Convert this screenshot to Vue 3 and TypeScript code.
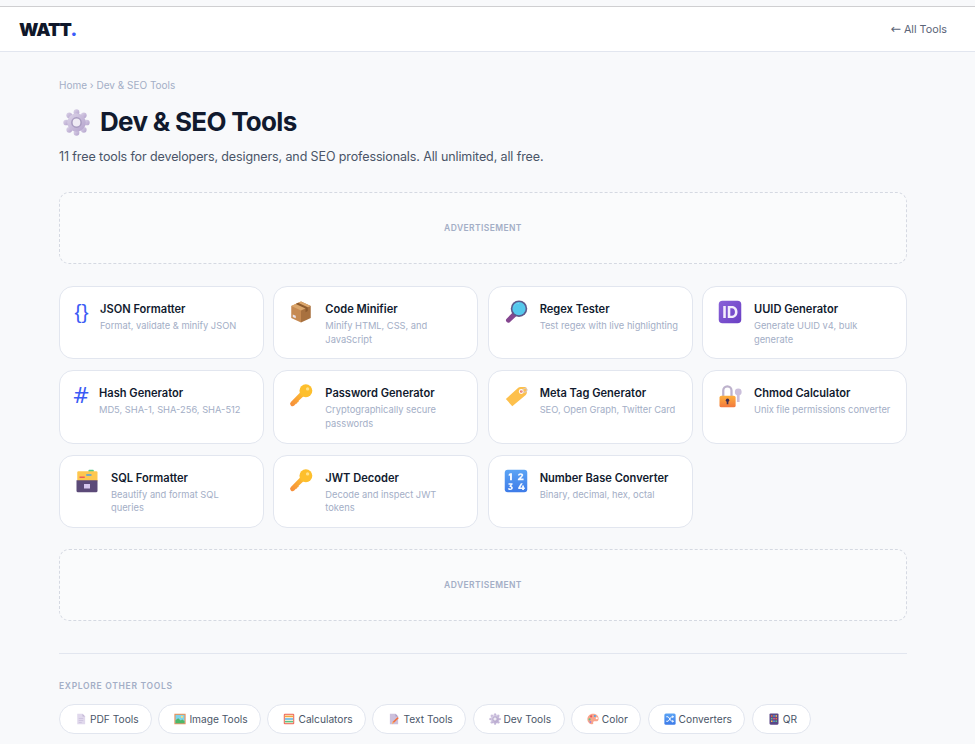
<script setup lang="ts">
interface Tool {
  name: string;
  desc: string;
  icon: string;
  iconWidth: number;
}

const tools: Tool[] = [
  { name: 'JSON Formatter', desc: 'Format, validate & minify JSON', icon: 'braces', iconWidth: 13 },
  { name: 'Code Minifier', desc: 'Minify HTML, CSS, and JavaScript', icon: 'box', iconWidth: 24 },
  { name: 'Regex Tester', desc: 'Test regex with live highlighting', icon: 'search', iconWidth: 24 },
  { name: 'UUID Generator', desc: 'Generate UUID v4, bulk generate', icon: 'id', iconWidth: 24 },
  { name: 'Hash Generator', desc: 'MD5, SHA-1, SHA-256, SHA-512', icon: 'hash', iconWidth: 12 },
  { name: 'Password Generator', desc: 'Cryptographically secure passwords', icon: 'key', iconWidth: 24 },
  { name: 'Meta Tag Generator', desc: 'SEO, Open Graph, Twitter Card', icon: 'tag', iconWidth: 24 },
  { name: 'Chmod Calculator', desc: 'Unix file permissions converter', icon: 'lock', iconWidth: 24 },
  { name: 'SQL Formatter', desc: 'Beautify and format SQL queries', icon: 'cabinet', iconWidth: 24 },
  { name: 'JWT Decoder', desc: 'Decode and inspect JWT tokens', icon: 'key', iconWidth: 24 },
  { name: 'Number Base Converter', desc: 'Binary, decimal, hex, octal', icon: 'numbers', iconWidth: 24 },
];

const chips = [
  { label: 'PDF Tools', icon: 'doc' },
  { label: 'Image Tools', icon: 'picture' },
  { label: 'Calculators', icon: 'abacus' },
  { label: 'Text Tools', icon: 'memo' },
  { label: 'Dev Tools', icon: 'gear' },
  { label: 'Color', icon: 'palette' },
  { label: 'Converters', icon: 'shuffle' },
  { label: 'QR', icon: 'qr' },
];
</script>

<template>
  <div class="page">
    <div class="top-strip"></div>
    <header class="header">
      <span class="logo">WATT<span class="logo-dot">.</span></span>
      <a class="back"><span class="back-arrow">←</span> All Tools</a>
    </header>

    <main class="main">
      <div class="crumbs">Home › Dev &amp; SEO Tools</div>
      <div class="title-row">
        <svg class="title-icon" viewBox="0 0 32 32">
          <use href="#i-gear" />
        </svg>
        <h1>Dev &amp; SEO Tools</h1>
      </div>
      <p class="lead">11 free tools for developers, designers, and SEO professionals. All unlimited, all free.</p>

      <div class="ad">ADVERTISEMENT</div>

      <div class="grid">
        <a v-for="tool in tools" :key="tool.name" class="card">
          <span class="card-icon" :style="{ width: tool.iconWidth + 'px' }">
            <span v-if="tool.icon === 'braces'" class="glyph braces">{}</span>
            <span v-else-if="tool.icon === 'hash'" class="glyph hash">#</span>
            <svg v-else viewBox="0 0 32 32" width="24" height="24">
              <use :href="'#i-' + tool.icon" />
            </svg>
          </span>
          <span class="card-body">
            <span class="card-name">{{ tool.name }}</span>
            <span class="card-desc">{{ tool.desc }}</span>
          </span>
        </a>
      </div>

      <div class="ad ad-second">ADVERTISEMENT</div>

      <div class="divider"></div>

      <div class="explore-label">EXPLORE OTHER TOOLS</div>
      <div class="chips">
        <a v-for="chip in chips" :key="chip.label" class="chip">
          <svg viewBox="0 0 32 32" width="12" height="12">
            <use :href="'#i-' + chip.icon" />
          </svg>
          {{ chip.label }}
        </a>
      </div>
    </main>

    <!-- shared emoji style icons -->
    <svg class="defs" width="0" height="0" aria-hidden="true">
      <defs>
        <linearGradient id="g-gear" x1="0" y1="0" x2="1" y2="1">
          <stop offset="0" stop-color="#ddd5e9" />
          <stop offset="1" stop-color="#b3a2cc" />
        </linearGradient>
        <linearGradient id="g-key" x1="1" y1="0" x2="0" y2="1">
          <stop offset="0" stop-color="#ffc72e" />
          <stop offset="1" stop-color="#f58a3c" />
        </linearGradient>
        <linearGradient id="g-blue" x1="0" y1="0" x2="0" y2="1">
          <stop offset="0" stop-color="#5ba4f5" />
          <stop offset="1" stop-color="#3d7be8" />
        </linearGradient>
        <linearGradient id="g-purple" x1="0" y1="0" x2="1" y2="1">
          <stop offset="0" stop-color="#8a63d8" />
          <stop offset="1" stop-color="#6a3fc4" />
        </linearGradient>
        <linearGradient id="g-lock" x1="0" y1="0" x2="0" y2="1">
          <stop offset="0" stop-color="#fdb03c" />
          <stop offset="1" stop-color="#f2793f" />
        </linearGradient>

        <symbol id="i-gear" viewBox="0 0 32 32">
          <g fill="url(#g-gear)">
            <circle cx="16" cy="3.800" r="3.400" />
            <circle cx="16" cy="28.200" r="3.400" />
            <circle cx="3.800" cy="16" r="3.400" />
            <circle cx="28.200" cy="16" r="3.400" />
            <circle cx="7.400" cy="7.400" r="3.400" />
            <circle cx="24.600" cy="7.400" r="3.400" />
            <circle cx="7.400" cy="24.600" r="3.400" />
            <circle cx="24.600" cy="24.600" r="3.400" />
            <circle cx="16" cy="16" r="11" />
          </g>
          <circle cx="16" cy="16" r="5.500" fill="#efebf4" stroke="#a89bc0" stroke-width="1.800" />
        </symbol>

        <symbol id="i-box" viewBox="0 0 32 32">
          <path d="M16 2 29 8v16l-13 6z" fill="#a8713f" />
          <path d="M16 2 3 8v16l13 6z" fill="#c68a52" />
          <path d="M3 8l13 6 13-6-13-6z" fill="#dba66b" />
          <path d="M9 5.200 22 11.200v5l3-1.400v-5.200L12 3.700z" fill="#8b5a2e" />
          <path d="M5 22.500l4 1.800v-3.200l-4-1.800z" fill="#e8e2ea" />
        </symbol>

        <symbol id="i-search" viewBox="0 0 32 32">
          <path d="M11.500 16.500 3.500 25a3 3 0 0 0 4.500 4.200L17 21z" fill="#84468f" />
          <circle cx="20" cy="11.500" r="11" fill="#5c5a8c" />
          <circle cx="20" cy="11.500" r="8.800" fill="#55c8ec" />
          <path d="M13 10a7 7 0 0 1 7-5.500 6.500 6.500 0 0 0-7 5.500z" fill="#bdeefb" />
        </symbol>

        <symbol id="i-id" viewBox="0 0 32 32">
          <rect x="1" y="1" width="30" height="30" rx="5" fill="url(#g-purple)" />
          <path d="M7 8h3.400v16H7z" fill="#f3eefc" />
          <path fill-rule="evenodd" d="M13 8h5.400c4.600 0 7.600 3.200 7.600 8s-3 8-7.600 8H13zm3.400 3v10h2c2.600 0 4.200-2 4.200-5s-1.600-5-4.200-5z" fill="#f3eefc" />
        </symbol>

        <symbol id="i-key" viewBox="0 0 32 32">
          <path d="M16.500 9.500 2.500 24a3.200 3.200 0 0 0 4.500 4.600l2.200-2.300 1.500-.2.300-1.600 1.700-.4.200-1.700 10-9.500z" fill="url(#g-key)" />
          <circle cx="22.500" cy="9" r="8.600" fill="#fdbf2d" />
          <circle cx="24.800" cy="6.500" r="2.200" fill="#ffe28a" />
        </symbol>

        <symbol id="i-tag" viewBox="0 0 32 32">
          <path d="M2.500 20 19 5q1-1 3-1h5.500q3 0 3 3v4q0 2-1.500 3.500L11 29.500z" fill="#fdc04c" />
          <circle cx="23" cy="10" r="3.200" fill="#fff" />
          <circle cx="23" cy="10" r="1.800" fill="#f0705c" />
          <path d="M23 10c3-5 7.500-5 8-2.500s-3.500 4-6 3.500" fill="none" stroke="#d6ccdc" stroke-width="1.300" />
        </symbol>

        <symbol id="i-lock" viewBox="0 0 32 32">
          <circle cx="27" cy="10.500" r="4.500" fill="#cbbfdb" />
          <rect x="25.200" y="12" width="3.600" height="12" fill="#cbbfdb" />
          <path d="M5.500 16V8.500a7 7 0 0 1 14 0V16h-3V8.500a4 4 0 0 0-8 0V16z" fill="#bdb2cc" />
          <rect x="2" y="15.500" width="21.500" height="15.500" rx="2.500" fill="url(#g-lock)" />
          <circle cx="12.700" cy="21.500" r="2.300" fill="#3d2c52" />
          <rect x="11.600" y="21.500" width="2.200" height="5.500" fill="#3d2c52" />
        </symbol>

        <symbol id="i-cabinet" viewBox="0 0 32 32">
          <rect x="18" y="1" width="7" height="4" rx="1" fill="#4fc98a" />
          <rect x="3" y="3" width="27" height="14" rx="1.500" fill="#fdc74f" />
          <rect x="15" y="7" width="7" height="2" fill="#4aa0e8" />
          <rect x="6" y="10" width="7" height="2" fill="#ef5a5a" />
          <path d="M2 15h28v14a2 2 0 0 1-2 2H4a2 2 0 0 1-2-2z" fill="#5b4a78" />
          <rect x="12" y="20" width="8" height="6" fill="#d5c6ee" />
        </symbol>

        <symbol id="i-numbers" viewBox="0 0 32 32">
          <rect x="1" y="1" width="30" height="30" rx="4" fill="url(#g-blue)" />
          <path d="M8 5.500h2.600V15H8V8.500L6.300 9.300V7zM18.500 15v-1.800l4.300-4c.8-.8.600-1.700-.6-1.700-.9 0-1.400.4-1.600 1.300l-2.100-.3c.3-2 1.800-3 3.800-3 3.300 0 4.300 2.600 2.400 4.600L22.400 12.800h3.700V15zM6 19h5.400v1.600l-1.800 2c1.300.2 2.200 1.200 2.200 2.500 0 1.900-1.600 3-3.500 3-1.500 0-2.800-.7-3.200-2.200l2-.6c.2.600.6 1 1.200 1 .7 0 1.200-.4 1.200-1.100 0-.9-.9-1.200-2.200-1.100v-1.500l1.500-1.700H6zM22.500 19h2.500l-3.300 5.500h2.500V22h2.400v2.500h1.200v2h-1.200V28h-2.400v-1.500H19v-1.800z" fill="#f5f9ff" />
        </symbol>

        <symbol id="i-doc" viewBox="0 0 32 32">
          <path d="M6 2h14l7 7v21H6z" fill="#e0d8ec" />
          <path d="M20 2l7 7h-7z" fill="#c4b8d6" />
          <path d="M10 14h12v2H10zm0 5h12v2H10zm0 5h8v2h-8z" fill="#c9bedb" />
        </symbol>

        <symbol id="i-picture" viewBox="0 0 32 32">
          <rect x="1" y="2" width="30" height="28" fill="#e8925c" />
          <rect x="4" y="5" width="24" height="22" fill="#7fd4ec" />
          <path d="M4 27V19l7-5 7 6 4-3 6 4v6z" fill="#4db868" />
          <circle cx="21" cy="10" r="3" fill="#fde07a" />
        </symbol>

        <symbol id="i-abacus" viewBox="0 0 32 32">
          <rect x="2" y="2" width="28" height="28" rx="3" fill="#ef6f5f" />
          <rect x="5" y="5" width="22" height="22" fill="#fff4e0" />
          <path d="M5 7h22v4H5z" fill="#f4a640" />
          <path d="M5 14h22v4H5z" fill="#5ab6e8" />
          <path d="M5 21h22v4H5z" fill="#5cc48a" />
        </symbol>

        <symbol id="i-memo" viewBox="0 0 32 32">
          <path d="M5 2h15l7 7v21H5z" fill="#ccc0dc" />
          <path d="M20 2l7 7h-7z" fill="#ab9cc0" />
          <path d="M29 13 16 26l-5 4 1-6 13-13z" fill="#f4703c" />
          <path d="M11 30l1-6 4 2z" fill="#ffd08a" />
        </symbol>

        <symbol id="i-palette" viewBox="0 0 32 32">
          <path d="M16 2C7 2 1 9 1 16.500S7 30 14 30c3 0 3-2 2.500-4s.5-4 3-4h5c4 0 6.500-3 6.500-7C31 7 24 2 16 2z" fill="#f9a58c" />
          <circle cx="11" cy="9" r="2.800" fill="#e85a5a" />
          <circle cx="21" cy="8" r="2.800" fill="#4da6e8" />
          <circle cx="7" cy="17" r="2.800" fill="#5cc48a" />
          <circle cx="26" cy="14" r="2.800" fill="#fff" />
          <circle cx="9" cy="24" r="2.400" fill="#a47bd8" />
        </symbol>

        <symbol id="i-shuffle" viewBox="0 0 32 32">
          <rect x="1" y="1" width="30" height="30" rx="4" fill="url(#g-blue)" />
          <path d="M6 10h5l9 12h3M6 22h5l9-12h3" fill="none" stroke="#fff" stroke-width="2.500" />
          <path d="M22 6l5 4-5 4zM22 18l5 4-5 4z" fill="#fff" />
        </symbol>

        <symbol id="i-qr" viewBox="0 0 32 32">
          <rect x="4" y="1" width="24" height="30" rx="3" fill="#5a4686" />
          <rect x="8" y="6" width="4" height="4" fill="#f4703c" />
          <rect x="14" y="6" width="4" height="4" fill="#4da6e8" />
          <rect x="20" y="6" width="4" height="4" fill="#fdc74f" />
          <rect x="8" y="13" width="4" height="4" fill="#5cc48a" />
          <rect x="14" y="13" width="4" height="4" fill="#ef5a8a" />
          <rect x="20" y="13" width="4" height="4" fill="#f4703c" />
          <rect x="8" y="20" width="4" height="4" fill="#fdc74f" />
          <rect x="14" y="20" width="4" height="4" fill="#4da6e8" />
          <rect x="20" y="20" width="4" height="4" fill="#5cc48a" />
        </symbol>
      </defs>
    </svg>
  </div>
</template>

<style>
html,
body {
  margin: 0;
  height: 744px;
  overflow: hidden;
  background: #f8f9fb;
}
</style>

<style scoped>
.page {
  font-family: Inter, "Liberation Sans", sans-serif;
  color: #111827;
}

.defs {
  position: absolute;
}

.top-strip {
  height: 6px;
  background: #f8f9fb;
  border-bottom: 1px solid #cfcfd1;
}

.header {
  height: 44px;
  background: #fff;
  border-bottom: 1px solid #e2e6ef;
  display: flex;
  align-items: center;
  justify-content: space-between;
  padding: 0 28px 0 19px;
}

.logo {
  font-size: 18px;
  font-weight: 900;
  letter-spacing: -0.8px;
  color: #0f172a;
}

.logo-dot {
  color: #3b5bfa;
}

.back {
  font-size: 10.8px;
  color: #5a6478;
}

.back-arrow {
  font-family: "DejaVu Sans", sans-serif;
  font-size: 12.5px;
  line-height: 10px;
}

.main {
  padding: 27px 68px 0 59px;
}

.crumbs {
  font-size: 10px;
  line-height: 13px;
  color: #a3aec6;
}

.title-row {
  display: flex;
  align-items: center;
  gap: 10px;
  margin-top: 13px;
  padding-left: 4px;
}

.title-icon {
  width: 27px;
  height: 27px;
}

h1 {
  margin: 0;
  font-size: 26px;
  line-height: 34px;
  font-weight: 700;
  letter-spacing: -0.7px;
  color: #111a2e;
}

.lead {
  margin: 9px 0 0;
  font-size: 12.5px;
  line-height: 18px;
  letter-spacing: -0.11px;
  color: #4a5568;
}

.ad {
  margin-top: 26px;
  height: 70px;
  background: #fafbfc;
  border: 1px dashed #d5d9e2;
  border-radius: 10px;
  display: flex;
  align-items: center;
  justify-content: center;
  font-size: 8.5px;
  font-weight: 600;
  letter-spacing: 0.4px;
  color: #a3aec6;
}

.ad-second {
  margin-top: 20.8px;
}

.grid {
  margin-top: 22px;
  display: grid;
  grid-template-columns: repeat(4, 1fr);
  gap: 11px 9.33px;
}

.card {
  height: 73.4px;
  box-sizing: border-box;
  background: #fff;
  border: 1px solid #e2e6ef;
  border-radius: 14px;
  padding: 13px 12px 0 15px;
  display: flex;
  gap: 12px;
}

.card-icon {
  flex: none;
  height: 24px;
  display: flex;
  align-items: center;
  justify-content: center;
}

.glyph {
  color: #3b5bf5;
  line-height: 24px;
  white-space: nowrap;
}

.braces {
  font-family: "Liberation Sans", sans-serif;
  font-size: 21px;
}

.hash {
  font-family: "DejaVu Sans", sans-serif;
  font-size: 21px;
}

.card-body {
  display: flex;
  flex-direction: column;
  min-width: 0;
}

.card-name {
  font-size: 11.1px;
  line-height: 18px;
  font-weight: 600;
  color: #111a2e;
}

.card-desc {
  margin-top: 1px;
  font-size: 9.3px;
  line-height: 13.5px;
  color: #a3aec6;
}

.divider {
  margin-top: 32px;
  height: 1px;
  background: #e2e6ef;
}

.explore-label {
  margin-top: 27px;
  font-size: 8.5px;
  line-height: 11px;
  font-weight: 600;
  letter-spacing: 0.7px;
  color: #a3aec6;
}

.chips {
  margin-top: 12px;
  display: flex;
  gap: 6.2px;
}

.chip {
  height: 30px;
  box-sizing: border-box;
  padding: 0 12.6px 0 15px;
  background: #fff;
  border: 1px solid #e2e6ef;
  border-radius: 15px;
  display: flex;
  align-items: center;
  gap: 3px;
  font-size: 10.2px;
  color: #4a5568;
}
</style>
